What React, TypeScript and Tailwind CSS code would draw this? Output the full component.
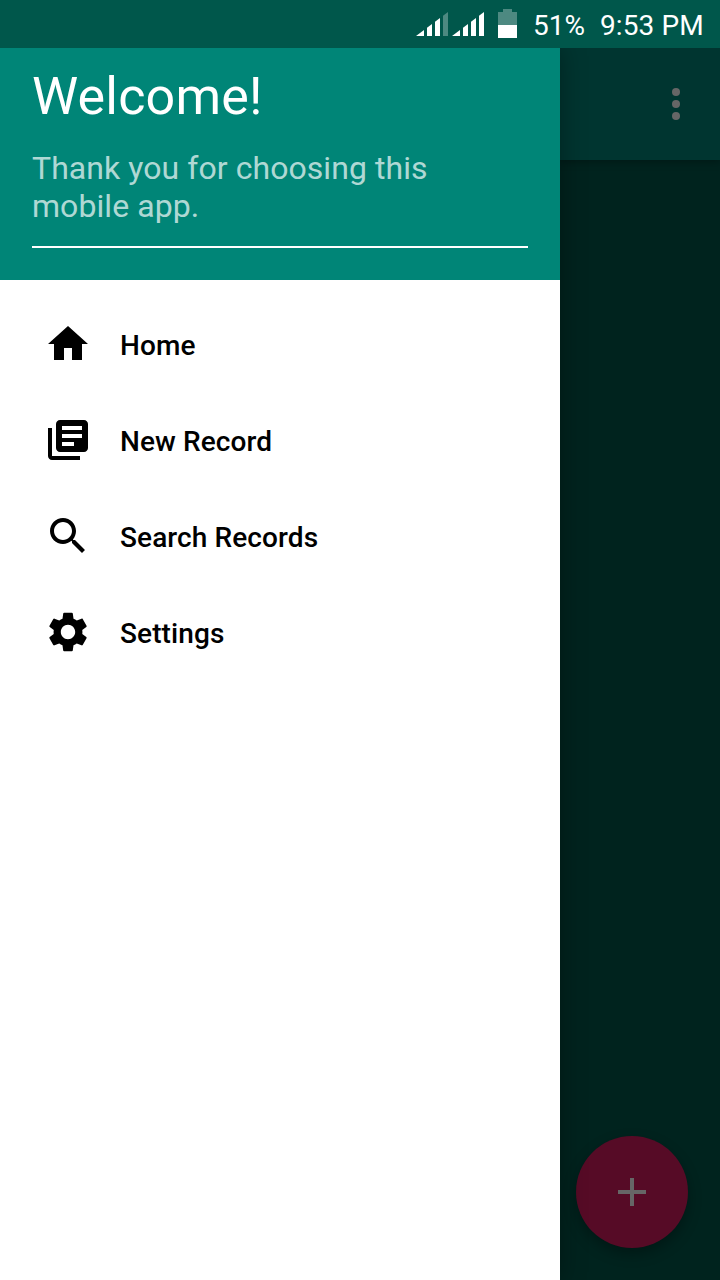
import React from 'react';

const menu = [
  { label: 'Home', d: 'M10 20v-6h4v6h5v-8h3L12 3 2 12h3v8z' },
  {
    label: 'New Record',
    d: 'M4 6H2v14c0 1.1.9 2 2 2h14v-2H4V6zm16-4H8c-1.1 0-2 .9-2 2v12c0 1.1.9 2 2 2h12c1.1 0 2-.9 2-2V4c0-1.1-.9-2-2-2zm-1 9H9V9h10v2zm-4 4H9v-2h6v2zm4-8H9V5h10v2z',
  },
  {
    label: 'Search Records',
    d: 'M15.5 14h-.79l-.28-.27C15.41 12.59 16 11.11 16 9.5 16 5.91 13.09 3 9.5 3S3 5.91 3 9.5 5.91 16 9.5 16c1.61 0 3.09-.59 4.23-1.57l.27.28v.79l5 4.99L20.49 19l-4.99-5zm-6 0C7.01 14 5 11.99 5 9.5S7.01 5 9.5 5 14 7.01 14 9.5 11.99 14 9.5 14z',
  },
  {
    label: 'Settings',
    d: 'M19.14 12.94c.04-.3.06-.61.06-.94 0-.32-.02-.64-.07-.94l2.03-1.58c.18-.14.23-.41.12-.61l-1.92-3.32c-.12-.22-.37-.29-.59-.22l-2.39.96c-.5-.38-1.03-.7-1.62-.94l-.36-2.54c-.04-.24-.24-.41-.48-.41h-3.84c-.24 0-.43.17-.47.41l-.36 2.54c-.59.24-1.13.57-1.62.94l-2.39-.96c-.22-.08-.47 0-.59.22L2.74 8.87c-.12.21-.08.47.12.61l2.03 1.58c-.05.3-.09.63-.09.94s.02.64.07.94l-2.03 1.58c-.18.14-.23.41-.12.61l1.92 3.32c.12.22.37.29.59.22l2.39-.96c.5.38 1.03.7 1.62.94l.36 2.54c.05.24.24.41.48.41h3.84c.24 0 .44-.17.47-.41l.36-2.54c.59-.24 1.13-.56 1.62-.94l2.39.96c.22.08.47 0 .59-.22l1.92-3.32c.12-.22.07-.47-.12-.61l-2.01-1.58zM12 15.6c-1.98 0-3.6-1.62-3.6-3.6s1.62-3.6 3.6-3.6 3.6 1.62 3.6 3.6-1.62 3.6-3.6 3.6z',
  },
];

function Signal({ full }: { full: boolean }) {
  return (
    <svg width="32" height="24" viewBox="0 0 32 24" fill="#fff" className="block shrink-0">
      <path d="M0 24L8 18V24zM11 24V15.75L16 12V24zM19 24V9.75L24 6V24z" />
      <path d="M27 24V3.75L32 0V24z" opacity={full ? 1 : 0.3} />
    </svg>
  );
}

function StatusBar() {
  return (
    <header className="flex h-12 shrink-0 items-center justify-end bg-[#00574b] pr-[15px] text-white">
      <div className="flex gap-1">
        <Signal full={false} />
        <Signal full />
      </div>
      <svg width="19" height="29" viewBox="0 0 19 29" fill="#fff" className="mb-px ml-3.5 block shrink-0">
        <path d="M5 0h9v3h5v13H0V3h5z" opacity="0.3" />
        <path d="M0 16h19v13H0z" />
      </svg>
      <span className="ml-4 w-[67px] whitespace-nowrap pt-1 text-[28px] leading-8">51%</span>
      <span className="w-[105px] whitespace-nowrap pt-1 text-[28px] leading-8 tracking-[0.1px]">9:53 PM</span>
    </header>
  );
}

function Drawer() {
  return (
    <aside className="z-10 flex w-[560px] shrink-0 flex-col bg-white shadow-[0_0_24px_rgba(0,0,0,0.35)]">
      <div className="flex h-[232px] flex-col bg-[#008577] px-8 pt-[17px]">
        <h1 className="text-[52px] leading-[64px] tracking-[0.2px] text-white">Welcome!</h1>
        <p className="mt-5 text-[32px] leading-[38px] tracking-[0.06px] text-white/70">
          Thank you for choosing this
          <br />
          mobile app.
        </p>
        <div className="mt-[21px] h-0.5 bg-white" />
      </div>
      <nav className="flex flex-col pt-4">
        {menu.map((item) => (
          <a key={item.label} className="flex h-24 items-center gap-7 pl-11">
            <svg width="48" height="48" viewBox="0 0 24 24" className="block shrink-0">
              <path d={item.d} />
            </svg>
            <span className="pt-1 text-[28px] font-medium leading-8 tracking-[0.1px] text-black">{item.label}</span>
          </a>
        ))}
      </nav>
    </aside>
  );
}

export default function App() {
  return (
    <div className="flex h-[1280px] w-[720px] flex-col overflow-hidden bg-[#00231e] font-['Roboto',sans-serif]">
      <StatusBar />
      <div className="flex min-h-0 flex-1 overflow-hidden">
        <Drawer />
        <main className="flex flex-1 flex-col">
          <div className="flex h-28 items-center justify-end bg-[#003530] pr-5 shadow-[0_2px_8px_rgba(0,0,0,0.3)]">
            <svg width="48" height="48" viewBox="0 0 24 24" fill="#666" className="block">
              <circle cx="12" cy="6" r="2" />
              <circle cx="12" cy="12" r="2" />
              <circle cx="12" cy="18" r="2" />
            </svg>
          </div>
          <button className="mr-8 mb-8 mt-auto flex size-28 items-center justify-center self-end rounded-full bg-[#560b26] shadow-[0_6px_14px_rgba(0,0,0,0.3)]">
            <svg width="48" height="48" viewBox="0 0 24 24" fill="#666">
              <path d="M19 13h-6v6h-2v-6H5v-2h6V5h2v6h6v2z" />
            </svg>
          </button>
        </main>
      </div>
    </div>
  );
}
